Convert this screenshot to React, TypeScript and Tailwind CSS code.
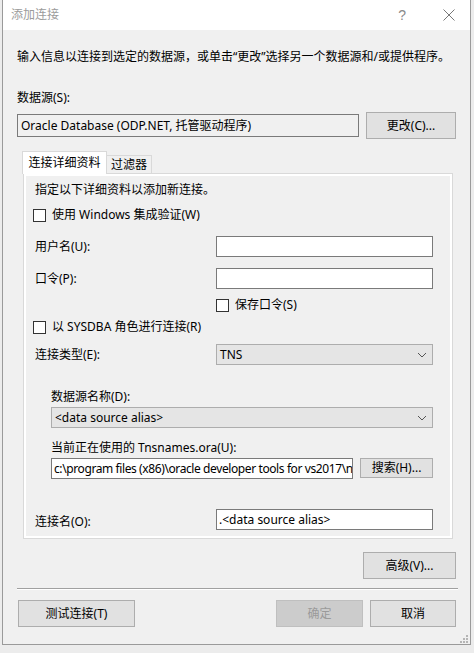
import React from "react";

const Checkbox = ({ label }: { label: React.ReactNode }) => (
  <div className="flex items-center h-[16px]">
    <span className="w-[13px] h-[13px] border border-[#333333] bg-white shrink-0" />
    <span className="ml-[6px]">{label}</span>
  </div>
);

const Chevron = () => (
  <svg width="10" height="6" viewBox="0 0 10 6" className="shrink-0">
    <polyline points="1,1 5,5 9,1" fill="none" stroke="#555" strokeWidth="1" />
  </svg>
);

const Select = ({ value, width }: { value: string; width: string }) => (
  <div
    className={`${width} h-[21px] border border-[#adadad] bg-[#e5e5e5] flex items-center justify-between pl-[3px] pr-[5px]`}
  >
    <span>{value}</span>
    <Chevron />
  </div>
);

const Button = ({
  children,
  className,
  disabled,
}: {
  children: React.ReactNode;
  className: string;
  disabled?: boolean;
}) => (
  <div
    className={`${className} h-[27px] flex items-center justify-center border ${
      disabled
        ? "bg-[#cccccc] border-[#bfbfbf] text-[#9a9a9a]"
        : "bg-[#e1e1e1] border-[#adadad] text-black"
    }`}
  >
    {children}
  </div>
);

export default function App() {
  return (
    <div className="w-[474px] h-[653px] bg-[#ececec] overflow-hidden text-[12px] leading-[16px] text-black font-['Noto_Sans','Noto_Sans_CJK_SC',sans-serif]">
      <div className="ml-[2px] w-[469px] h-[645px] border-x border-b border-[#9a9a9a] bg-[#f0f0f0] flex flex-col">
        {/* title bar */}
        <div className="h-[30px] bg-white flex items-center pl-[8px] pr-[15px] shrink-0">
          <span className="text-[#9b9b9b] text-[12px]">添加连接</span>
          <span className="ml-auto text-[#8a8a8a] text-[14px] font-['Liberation_Sans',sans-serif] mr-[37px]">?</span>
          <svg width="12" height="12" viewBox="0 0 12 12">
            <line x1="0.5" y1="0.5" x2="11.5" y2="11.5" stroke="#777" strokeWidth="1" />
            <line x1="11.5" y1="0.5" x2="0.5" y2="11.5" stroke="#777" strokeWidth="1" />
          </svg>
        </div>

        <div className="flex flex-col pl-[14px] pr-[14px] relative flex-1">
          <p className="mt-[19px] whitespace-nowrap">
            输入信息以连接到选定的数据源，或单击“更改”选择另一个数据源和/或提供程序。
          </p>
          <p className="mt-[25px]">数据源(S):</p>

          <div className="mt-[6px] flex items-center">
            <div className="w-[342px] h-[23px] border border-[#7a7a7a] bg-[#f0f0f0] flex items-center pl-[3px] whitespace-nowrap">
              Oracle Database (ODP.NET, 托管驱动程序)
            </div>
            <Button className="ml-[7px] w-[90px]">更改(C)...</Button>
          </div>

          {/* tabs */}
          <div className="mt-[12px] ml-[5px] flex items-end relative z-10">
            <div className="w-[85px] h-[23px] -mb-[1px] bg-white border-t border-x border-[#d9d9d9] flex items-center justify-center">
              连接详细资料
            </div>
            <div className="w-[45px] h-[18px] bg-[#f0f0f0] border-t border-r border-[#d9d9d9] flex items-center justify-center">
              过滤器
            </div>
          </div>

          {/* tab page */}
          <div className="ml-[6px] w-[430px] h-[366px] border border-[#d9d9d9] shrink-0">
            <div className="h-full border-2 border-white bg-[#f0f0f0] flex flex-col">
              <p className="mt-[6px] ml-[9px]">指定以下详细资料以添加新连接。</p>

              <div className="mt-[9px] ml-[7px]">
                <Checkbox label="使用 Windows 集成验证(W)" />
              </div>

              <div className="mt-[13px] ml-[9px] flex items-center">
                <span className="w-[181px]">用户名(U):</span>
                <div className="w-[217px] h-[21px] border border-[#7a7a7a] bg-white" />
              </div>

              <div className="mt-[11px] ml-[9px] flex items-center">
                <span className="w-[181px]">口令(P):</span>
                <div className="w-[217px] h-[21px] border border-[#7a7a7a] bg-white" />
              </div>

              <div className="mt-[8px] ml-[190px]">
                <Checkbox label="保存口令(S)" />
              </div>

              <div className="mt-[6px] ml-[7px]">
                <Checkbox label="以 SYSDBA 角色进行连接(R)" />
              </div>

              <div className="mt-[9px] ml-[9px] flex items-center">
                <span className="w-[181px]">连接类型(E):</span>
                <Select value="TNS" width="w-[217px]" />
              </div>

              <p className="mt-[24px] ml-[25px]">数据源名称(D):</p>
              <div className="mt-[2px] ml-[25px]">
                <Select value="<data source alias>" width="w-[382px]" />
              </div>

              <p className="mt-[12px] ml-[25px]">当前正在使用的 Tnsnames.ora(U):</p>
              <div className="mt-[2px] ml-[25px] flex items-start">
                <div className="w-[302px] h-[21px] border border-[#7a7a7a] bg-white pl-[2px] flex items-center overflow-hidden">
                  <span className="whitespace-nowrap tracking-[-0.4px]">
                    c:\program files (x86)\oracle developer tools for vs2017\netw
                  </span>
                </div>
                <div className="ml-[7px] w-[73px] h-[20px] border border-[#adadad] bg-[#e1e1e1] flex items-center justify-center">
                  搜索(H)...
                </div>
              </div>

              <div className="mt-[30px] ml-[9px] flex items-start">
                <span className="w-[181px] mt-[5px]">连接名(O):</span>
                <div className="w-[217px] h-[21px] border border-[#7a7a7a] bg-white pl-[2px] flex items-center whitespace-nowrap">
                  .&lt;data source alias&gt;
                </div>
              </div>
            </div>
          </div>

          <div className="mt-[13px] flex justify-end">
            <Button className="w-[93px]">高级(V)...</Button>
          </div>

          <div className="mt-[9px] -mr-[2px] h-[1px] bg-[#a0a0a0] border-b border-white box-content" />

          <div className="mt-[10px] flex items-center">
            <Button className="ml-[1px] w-[117px]">测试连接(T)</Button>
            <Button className="ml-auto w-[87px]" disabled>
              确定
            </Button>
            <Button className="ml-[7px] w-[86px]">取消</Button>
          </div>

          {/* size grip */}
          <svg
            width="9"
            height="9"
            viewBox="0 0 9 9"
            className="absolute right-[2px] bottom-[1px]"
          >
            <rect x="7" y="1" width="2" height="2" fill="#b5b5b5" />
            <rect x="4" y="4" width="2" height="2" fill="#b5b5b5" />
            <rect x="7" y="4" width="2" height="2" fill="#b5b5b5" />
            <rect x="1" y="7" width="2" height="2" fill="#b5b5b5" />
            <rect x="4" y="7" width="2" height="2" fill="#b5b5b5" />
            <rect x="7" y="7" width="2" height="2" fill="#b5b5b5" />
          </svg>
        </div>
      </div>
    </div>
  );
}
